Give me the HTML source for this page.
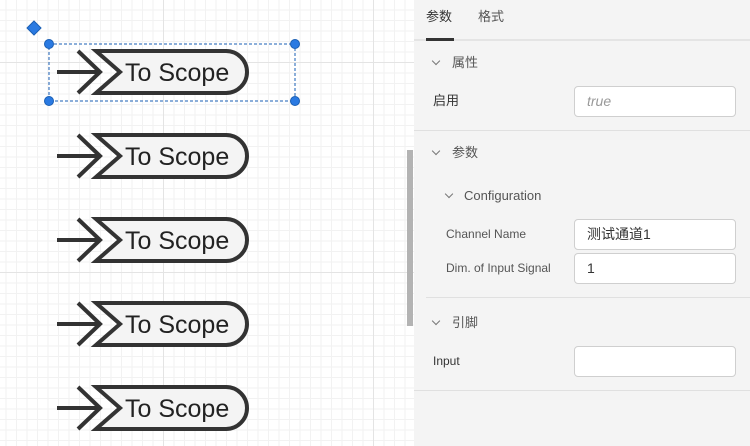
<!DOCTYPE html>
<html><head><meta charset="utf-8"><style>
*{margin:0;padding:0;box-sizing:border-box}
body{width:750px;height:446px;overflow:hidden;position:relative;font-family:"Liberation Sans","Noto Sans CJK SC",sans-serif;background:#fff}
#canvas{position:absolute;left:0;top:0;width:414px;height:446px;
background-color:#fff;
background-image:
linear-gradient(#e4e4e4 1px,transparent 1px),linear-gradient(90deg,#e4e4e4 1px,transparent 1px),
linear-gradient(#f2f2f2 1px,transparent 1px),linear-gradient(90deg,#f2f2f2 1px,transparent 1px);
background-size:210px 210px,210px 210px,10.5px 10.5px,10.5px 10.5px;
background-position:0 62px,163px 0,0 62px,163px 0;}
#sb{position:absolute;left:407px;top:150px;width:6px;height:176px;background:#b3b3b3}
#panel{position:absolute;left:414px;top:0;width:336px;height:446px;background:#f4f4f4;color:#333;font-size:13px}
.t{position:absolute;white-space:nowrap;line-height:16px}
.hr{position:absolute;height:1px;background:#e0e0e0}
.in{position:absolute;left:160px;width:162px;height:31px;background:#fff;border:1px solid #cfcfcf;border-radius:4px;font-size:14px;padding-left:12px;line-height:29px}
.ch{position:absolute;width:6px;height:6px;border-right:1.5px solid #777;border-bottom:1.5px solid #777;transform:rotate(45deg)}
</style></head><body>
<div id="canvas"></div>
<svg width="414" height="446" style="position:absolute;left:0;top:0">
<defs><g id="blk">
<line x1="57" y1="0" x2="100" y2="0" stroke="#333" stroke-width="4"/>
<polyline points="78,-21 100,0 78,21" fill="none" stroke="#333" stroke-width="4"/>
<path d="M96,-21 H226 A21,21 0 0 1 226,21 H96 L120,0 Z" fill="#f4f4f4" stroke="#333" stroke-width="4" stroke-linejoin="miter"/>
<text x="125" y="9" font-family="Liberation Sans" font-size="25" fill="#222">To Scope</text>
</g></defs>
<use href="#blk" y="72"/><use href="#blk" y="156"/><use href="#blk" y="240"/><use href="#blk" y="324"/><use href="#blk" y="408"/>
<rect x="49" y="44" width="246" height="57" fill="none" stroke="#1a5fb4" stroke-dasharray="3,2"/>
<g fill="#2a7ae2" stroke="#1a5fb4"><circle cx="49" cy="44" r="4.5"/><circle cx="295" cy="44" r="4.5"/><circle cx="49" cy="101" r="4.5"/><circle cx="295" cy="101" r="4.5"/>
<path d="M34,21 L41,28 L34,35 L27,28 Z"/></g>
</svg>
<div id="sb"></div>
<div id="panel">
<div class="t" style="left:12px;top:9px">参数</div>
<div class="t" style="left:64px;top:9px;color:#555">格式</div>
<div class="hr" style="left:0;top:39px;width:336px;height:2px;background:#e4e4e4"></div>
<div style="position:absolute;left:12px;top:38px;width:28px;height:3px;background:#333"></div>
<div class="ch" style="left:19px;top:58px"></div><div class="t" style="left:38px;top:55px;color:#555">属性</div>
<div class="t" style="left:19px;top:93px">启用</div>
<div class="in" style="top:86px;color:#999;font-style:italic">true</div>
<div class="hr" style="left:0;top:130px;width:336px"></div>
<div class="ch" style="left:19px;top:148px"></div><div class="t" style="left:38px;top:145px;color:#555">参数</div>
<div class="ch" style="left:32px;top:191px"></div><div class="t" style="left:50px;top:188px;color:#555">Configuration</div>
<div class="t" style="left:32px;top:226px;font-size:12px;color:#555">Channel Name</div>
<div class="in" style="top:219px">测试通道1</div>
<div class="t" style="left:32px;top:260px;font-size:12px;color:#555">Dim. of Input Signal</div>
<div class="in" style="top:253px">1</div>
<div class="hr" style="left:12px;top:297px;width:324px"></div>
<div class="ch" style="left:19px;top:318px"></div><div class="t" style="left:38px;top:315px;color:#555">引脚</div>
<div class="t" style="left:19px;top:353px;font-size:12px">Input</div>
<div class="in" style="top:346px"></div>
<div class="hr" style="left:0;top:390px;width:336px"></div>
</div>
</body></html>
